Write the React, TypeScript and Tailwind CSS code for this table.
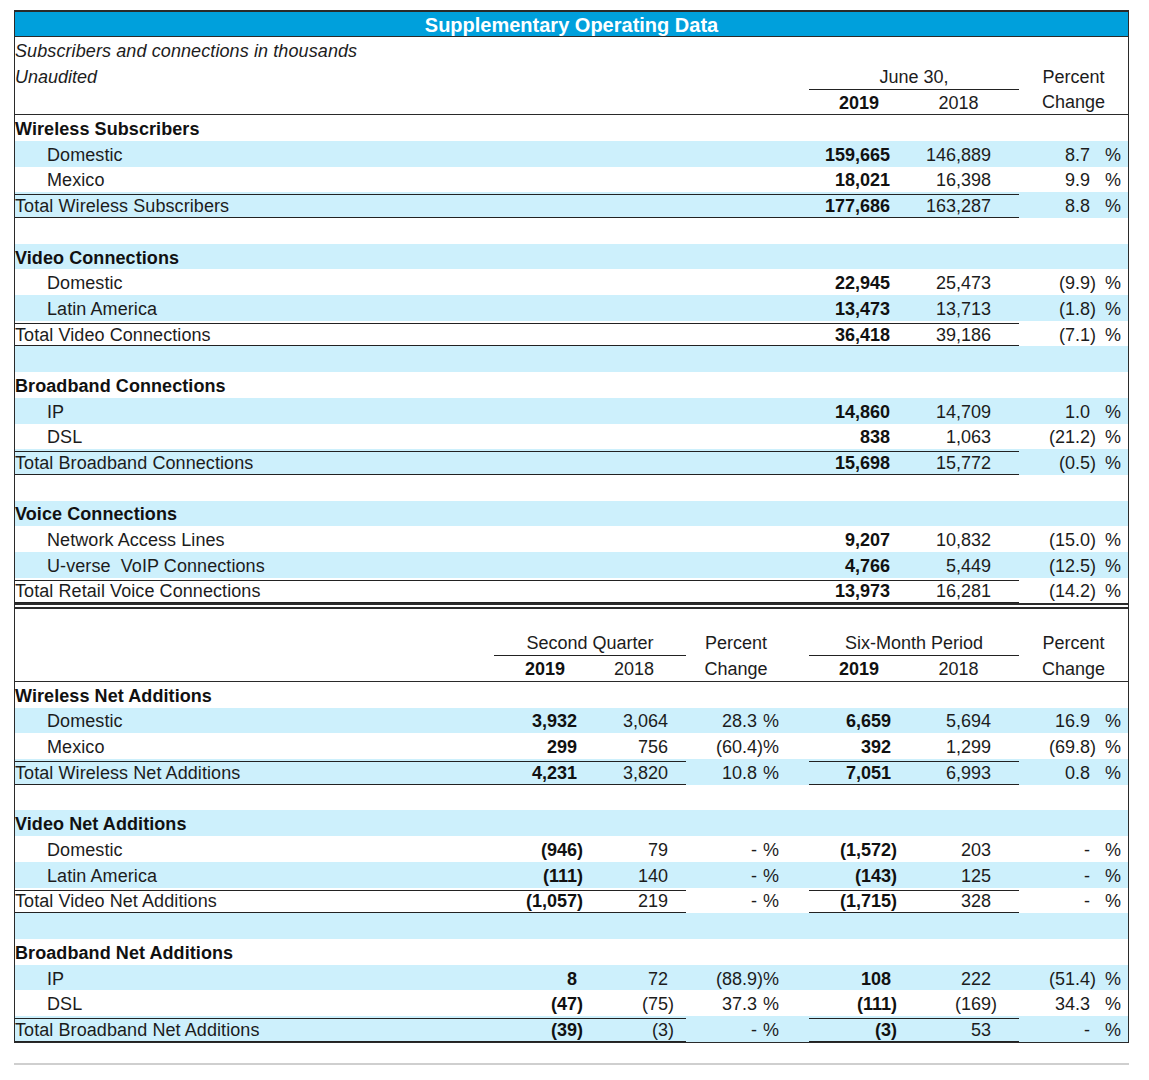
import React from "react";

type Kind = "section" | "item" | "total" | "blank";

type Row = {
  kind: Kind;
  label?: string;
  v?: string[];
};

const SUBSCRIBERS: Row[] = [
  { kind: "section", label: "Wireless Subscribers" },
  { kind: "item", label: "Domestic", v: ["159,665", "146,889", "8.7"] },
  { kind: "item", label: "Mexico", v: ["18,021", "16,398", "9.9"] },
  { kind: "total", label: "Total Wireless Subscribers", v: ["177,686", "163,287", "8.8"] },
  { kind: "blank" },
  { kind: "section", label: "Video Connections" },
  { kind: "item", label: "Domestic", v: ["22,945", "25,473", "(9.9)"] },
  { kind: "item", label: "Latin America", v: ["13,473", "13,713", "(1.8)"] },
  { kind: "total", label: "Total Video Connections", v: ["36,418", "39,186", "(7.1)"] },
  { kind: "blank" },
  { kind: "section", label: "Broadband Connections" },
  { kind: "item", label: "IP", v: ["14,860", "14,709", "1.0"] },
  { kind: "item", label: "DSL", v: ["838", "1,063", "(21.2)"] },
  { kind: "total", label: "Total Broadband Connections", v: ["15,698", "15,772", "(0.5)"] },
  { kind: "blank" },
  { kind: "section", label: "Voice Connections" },
  { kind: "item", label: "Network Access Lines", v: ["9,207", "10,832", "(15.0)"] },
  { kind: "item", label: "U-verse  VoIP Connections", v: ["4,766", "5,449", "(12.5)"] },
  { kind: "total", label: "Total Retail Voice Connections", v: ["13,973", "16,281", "(14.2)"] },
];

const NET_ADDS: Row[] = [
  { kind: "section", label: "Wireless Net Additions" },
  { kind: "item", label: "Domestic", v: ["3,932", "3,064", "28.3", "6,659", "5,694", "16.9"] },
  { kind: "item", label: "Mexico", v: ["299", "756", "(60.4)", "392", "1,299", "(69.8)"] },
  { kind: "total", label: "Total Wireless Net Additions", v: ["4,231", "3,820", "10.8", "7,051", "6,993", "0.8"] },
  { kind: "blank" },
  { kind: "section", label: "Video Net Additions" },
  { kind: "item", label: "Domestic", v: ["(946)", "79", "-", "(1,572)", "203", "-"] },
  { kind: "item", label: "Latin America", v: ["(111)", "140", "-", "(143)", "125", "-"] },
  { kind: "total", label: "Total Video Net Additions", v: ["(1,057)", "219", "-", "(1,715)", "328", "-"] },
  { kind: "blank" },
  { kind: "section", label: "Broadband Net Additions" },
  { kind: "item", label: "IP", v: ["8", "72", "(88.9)", "108", "222", "(51.4)"] },
  { kind: "item", label: "DSL", v: ["(47)", "(75)", "37.3", "(111)", "(169)", "34.3"] },
  { kind: "total", label: "Total Broadband Net Additions", v: ["(39)", "(3)", "-", "(3)", "53", "-"] },
];

// accounting style: positive values keep the room of a closing paren
function Num({ v }: { v?: string }) {
  if (!v) return null;
  const neg = v.endsWith(")");
  return (
    <span>
      {v}
      {!neg && <span className="invisible">)</span>}
    </span>
  );
}

function labelClass(kind: Kind) {
  if (kind === "section") return "font-bold text-[#111]";
  if (kind === "item") return "pl-[32px]";
  return "";
}

function Pct({ v }: { v?: string }) {
  if (!v) return <div />;
  return (
    <div className="flex items-center justify-end pr-[7px]">
      <Num v={v} />
      <span className="ml-[9px]">%</span>
    </div>
  );
}

function SubscriberRow({ row, blue }: { row: Row; blue: boolean }) {
  const line = row.kind === "total" ? "border-y border-[#222]" : "";
  const v = row.v ?? [];
  return (
    <div
      className={`grid h-[25.7px] grid-cols-[794px_100px_99px_11px_109px] pt-[2px] ${
        blue ? "bg-[#cdf0fc]" : ""
      }`}
    >
      <div className={`flex items-center whitespace-pre tracking-[0.08px] ${labelClass(row.kind)} ${line}`}>
        {row.label}
      </div>
      <div className={`flex items-center justify-end pr-[13px] font-bold text-[#111] ${line}`}>
        <Num v={v[0]} />
      </div>
      <div className={`flex items-center justify-end pr-[11px] ${line}`}>
        <Num v={v[1]} />
      </div>
      <div className={line} />
      <Pct v={v[2]} />
    </div>
  );
}

function NetAddRow({ row, blue }: { row: Row; blue: boolean }) {
  const line = row.kind === "total" ? "border-y border-[#222]" : "";
  const v = row.v ?? [];
  return (
    <div
      className={`grid h-[25.72px] grid-cols-[479px_102px_90px_123px_100px_99px_11px_109px] pt-[2px] ${
        blue ? "bg-[#cdf0fc]" : ""
      }`}
    >
      <div className={`flex items-center whitespace-pre tracking-[0.08px] ${labelClass(row.kind)} ${line}`}>
        {row.label}
      </div>
      <div className={`flex items-center justify-end pr-[13px] font-bold text-[#111] ${line}`}>
        <Num v={v[0]} />
      </div>
      <div className={`flex items-center justify-end pr-[12px] ${line}`}>
        <Num v={v[1]} />
      </div>
      <div className="flex items-center justify-end pr-[30px]">
        {v[2] ? (
          <>
            <Num v={v[2]} />%
          </>
        ) : null}
      </div>
      <div className={`flex items-center justify-end pr-[12px] font-bold text-[#111] ${line}`}>
        <Num v={v[3]} />
      </div>
      <div className={`flex items-center justify-end pr-[11px] ${line}`}>
        <Num v={v[4]} />
      </div>
      <div className={line} />
      <Pct v={v[5]} />
    </div>
  );
}

export default function App() {
  return (
    <div className="min-h-[1080px] bg-white pt-[10px] font-['Liberation_Sans',Arial,sans-serif] text-[18px] leading-none text-[#1c1c1c]">
      <div className="ml-[14px] w-[1115px] border-x border-b border-t-2 border-[#2a2a2a]">
        <div className="flex h-[25px] items-center justify-center border-b border-[#2a2a2a] bg-[#00a0dc] pt-[1px] text-[20px] font-bold text-white">
          Supplementary Operating Data
        </div>

        <div className="border-b border-[#2a2a2a]">
          <div className="flex h-[25.75px] items-center pt-[2px] italic tracking-[0.1px]">
            Subscribers and connections in thousands
          </div>
          <div className="grid h-[25.75px] grid-cols-[794px_100px_99px_11px_109px] pt-[2px]">
            <div className="flex items-center italic">Unaudited</div>
            <div className="col-span-3 flex items-center justify-center">June 30,</div>
            <div className="flex items-center justify-center">Percent</div>
          </div>
          <div className="grid h-[25.75px] grid-cols-[794px_100px_99px_11px_109px]">
            <div />
            <div className="flex items-center justify-center border-t border-[#222] pt-[2px] font-bold text-[#111]">
              2019
            </div>
            <div className="flex items-center justify-center border-t border-[#222] pt-[2px]">2018</div>
            <div className="border-t border-[#222]" />
            <div className="flex items-center justify-center pt-[2px]">Change</div>
          </div>
        </div>

        {SUBSCRIBERS.map((row, i) => (
          <SubscriberRow key={i} row={row} blue={i % 2 === 1} />
        ))}

        <div className="h-[6px] border-y-2 border-[#2a2a2a]" />

        <div className="h-[20px]" />
        <div className="border-b border-[#2a2a2a]">
          <div className="grid h-[25.75px] grid-cols-[479px_102px_90px_123px_100px_99px_11px_109px] pt-[1px]">
            <div />
            <div className="col-span-2 flex items-center justify-center">Second Quarter</div>
            <div className="flex items-center justify-center pr-[23px]">Percent</div>
            <div className="col-span-3 flex items-center justify-center">Six-Month Period</div>
            <div className="flex items-center justify-center">Percent</div>
          </div>
          <div className="grid h-[25.75px] grid-cols-[479px_102px_90px_123px_100px_99px_11px_109px]">
            <div />
            <div className="flex items-center justify-center border-t border-[#222] pt-[2px] font-bold text-[#111]">
              2019
            </div>
            <div className="flex items-center justify-end border-t border-[#222] pr-[32px] pt-[2px]">2018</div>
            <div className="flex items-center justify-center pr-[23px] pt-[2px]">Change</div>
            <div className="flex items-center justify-center border-t border-[#222] pt-[2px] font-bold text-[#111]">
              2019
            </div>
            <div className="flex items-center justify-center border-t border-[#222] pt-[2px]">2018</div>
            <div className="border-t border-[#222]" />
            <div className="flex items-center justify-center pt-[2px]">Change</div>
          </div>
        </div>

        {NET_ADDS.map((row, i) => (
          <NetAddRow key={i} row={row} blue={i % 2 === 1} />
        ))}
      </div>

      <div className="ml-[14px] mt-[20px] h-[2px] w-[1115px] bg-[#cfcfcf]" />
    </div>
  );
}
